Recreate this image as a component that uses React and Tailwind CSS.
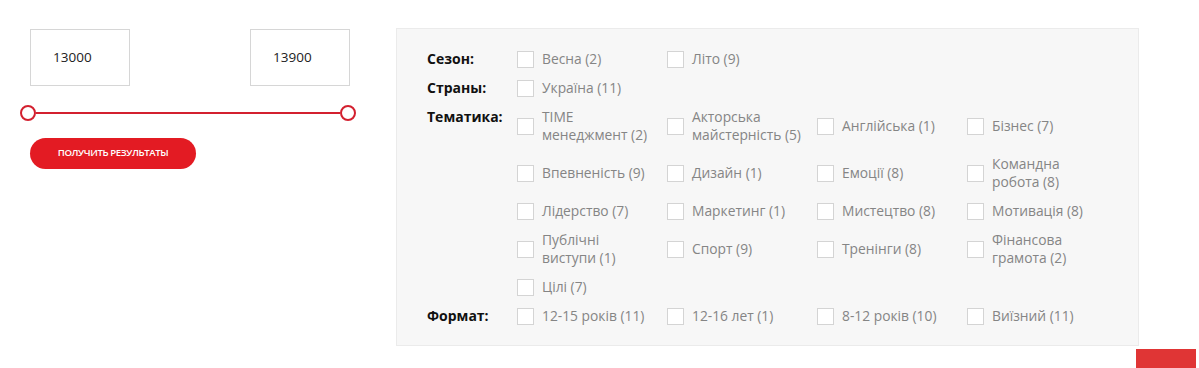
import React from "react";

const groups = [
    { label: "Сезон:", items: [["Весна (2)"], ["Літо (9)"]] },
    { label: "Страны:", items: [["Україна (11)"]] },
    {
        label: "Тематика:",
        items: [
            ["TIME", "менеджмент (2)"],
            ["Акторська", "майстерність (5)"],
            ["Англійська (1)"],
            ["Бізнес (7)"],
            ["Впевненість (9)"],
            ["Дизайн (1)"],
            ["Емоції (8)"],
            ["Командна", "робота (8)"],
            ["Лідерство (7)"],
            ["Маркетинг (1)"],
            ["Мистецтво (8)"],
            ["Мотивація (8)"],
            ["Публічні", "виступи (1)"],
            ["Спорт (9)"],
            ["Тренінги (8)"],
            ["Фінансова", "грамота (2)"],
            ["Цілі (7)"],
        ],
    },
    {
        label: "Формат:",
        items: [["12-15 років (11)"], ["12-16 лет (1)"], ["8-12 років (10)"], ["Виїзний (11)"]],
    },
];

const Check = ({ lines }) => (
    <label className="flex items-center gap-2 cursor-pointer">
        <span className="w-[17px] h-[17px] shrink-0 border border-[#d4d4d4] bg-white" />
        <span className="text-[13.8px] leading-[18px] text-[#858585] whitespace-nowrap">
            {lines.map((l, i) => (
                <span key={i} className="block">{l}</span>
            ))}
        </span>
    </label>
);

const App = () => {
    return (
        <div
            className="relative w-[1199px] h-[368px] bg-white overflow-hidden"
            style={{ fontFamily: '"Open Sans", "Noto Sans", sans-serif' }}
        >
            <div className="flex items-start pt-[28px] pl-[30px]">
                {/* price filter */}
                <div className="w-[320px] flex flex-col">
                    <div className="flex justify-between mt-[1px]">
                        <div className="w-[100px] h-[57px] border border-[#d6d6d6] flex items-center pl-[22px] text-[13.5px] text-[#222]">
                            13000
                        </div>
                        <div className="w-[100px] h-[57px] border border-[#d6d6d6] flex items-center pl-[22px] text-[13.5px] text-[#222]">
                            13900
                        </div>
                    </div>
                    <div className="flex items-center -ml-[10px] w-[336px] mt-[19px]">
                        <span className="w-[16px] h-[16px] rounded-full border-2 border-[#d3202f] bg-white shrink-0" />
                        <span className="flex-1 h-[2px] bg-[#d3202f]" />
                        <span className="w-[16px] h-[16px] rounded-full border-2 border-[#d3202f] bg-white shrink-0" />
                    </div>
                    <button className="mt-[17px] w-[166px] h-[31px] rounded-full bg-[#e31b23] text-white text-[9.6px] font-semibold tracking-[-0.4px] uppercase">
                        Получить результаты
                    </button>
                </div>

                {/* checkbox filters */}
                <div className="ml-[46px] w-[743px] h-[318px] bg-[#f7f7f7] border border-[#ebebeb] pt-[21px] pl-[30px] flex flex-col gap-[11px]">
                    {groups.map((g) => (
                        <div key={g.label} className="flex items-start">
                            <div className="w-[90px] text-[14px] leading-[18px] font-bold text-[#111]">{g.label}</div>
                            <div className="grid grid-cols-[150px_150px_150px_150px] gap-y-[11px]">
                                {g.items.map((it) => (
                                    <Check key={it.join(" ")} lines={it} />
                                ))}
                            </div>
                        </div>
                    ))}
                </div>
            </div>

            {/* scroll-up button, cut off by the viewport */}
            <div className="absolute left-[1136px] top-[349px] w-[60px] h-[40px] bg-[#e03535]" />
        </div>
    );
};

export default App;
